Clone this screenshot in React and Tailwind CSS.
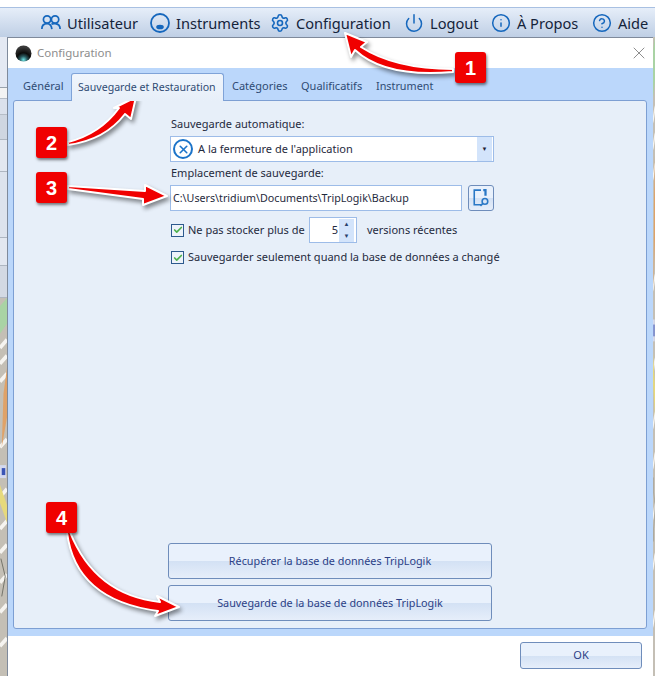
import { Settings, Power, Info, CircleHelp, X, Check } from 'lucide-react';

const toolbarItems = [
  { label: 'Utilisateur', icon: <UsersIcon />, width: 'w-[71px]' },
  { label: 'Instruments', icon: <InstrumentIcon />, width: 'w-[82px]' },
  { label: 'Configuration', icon: <Settings size={22} strokeWidth={1.9} />, width: 'w-[96px]' },
  { label: 'Logout', icon: <Power size={22} strokeWidth={1.8} />, width: 'w-[49px]' },
  { label: 'À Propos', icon: <Info size={22} strokeWidth={1.8} />, width: 'w-[63px]' },
  { label: 'Aide', icon: <CircleHelp size={22} strokeWidth={1.8} />, width: 'w-[31px]' },
];

const tabs = [
  { label: 'Général', className: 'w-[58px] pl-[10px] text-[11px]' },
  { label: 'Sauvegarde et Restauration', active: true, className: 'w-[153px] pl-[6px] text-[10.6px]' },
  { label: 'Catégories', className: 'w-[69px] pl-[8px] text-[11px]' },
  { label: 'Qualificatifs', className: 'w-[75px] pl-[8px] text-[11px]' },
  { label: 'Instrument', className: 'w-[80px] pl-[8px] text-[10.8px]' },
];

const badges = [
  { n: 1, className: 'left-[455px] top-[52px]' },
  { n: 2, className: 'left-[36px] top-[127px]' },
  { n: 3, className: 'left-[36px] top-[172px]' },
  { n: 4, className: 'left-[46px] top-[502px]' },
];

const glossy =
  'bg-[linear-gradient(to_bottom,#e9f1fc_0%,#e9f1fc_50%,#d3e1f4_50%,#e6eefa_100%)] border border-[#6f8dbb] rounded-[3px] text-[#2b3f86]';

function UsersIcon() {
  return (
    <svg width="23" height="20" viewBox="0 0 23 20" fill="none" stroke="currentColor" strokeWidth="2">
      <circle cx="7" cy="6" r="4.2" />
      <circle cx="16.2" cy="6" r="4.2" />
      <path d="M1 17c0-4 2.5-6.2 6-6.2s5 2 5.5 6.2" />
      <path d="M12 11.5c1-.6 2.6-.9 4.2-.7 3.500.3 5.800 2.500 5.800 6.200" />
    </svg>
  );
}

function InstrumentIcon() {
  return (
    <svg width="20" height="20" viewBox="0 0 20 20">
      <circle cx="10" cy="10" r="9" fill="none" stroke="currentColor" strokeWidth="1.8" />
      <ellipse cx="10" cy="14" rx="3.800" ry="2.300" fill="currentColor" />
    </svg>
  );
}

function Orb() {
  return (
    <svg width="17" height="17" viewBox="0 0 17 17">
      <defs>
        <radialGradient id="orb" cx="50%" cy="90%" r="80%">
          <stop offset="0%" stopColor="#6fe6e6" />
          <stop offset="28%" stopColor="#2a5a60" />
          <stop offset="55%" stopColor="#0b0b0b" />
          <stop offset="100%" stopColor="#3a3a3a" />
        </radialGradient>
      </defs>
      <circle cx="8.500" cy="8.500" r="8" fill="url(#orb)" />
    </svg>
  );
}

function CheckBox() {
  return (
    <span className="flex items-center justify-center w-[13px] h-[13px] shrink-0 border border-[#2d5a8e] bg-[#eef3fa]">
      <Check size={10} strokeWidth={4} className="text-[#4cb04c]" />
    </span>
  );
}

function MapStrip({ className }) {
  return (
    <svg className={className} viewBox="0 0 8 380" preserveAspectRatio="none">
      <rect width="8" height="380" fill="#c4bfb5" />
      <path d="M0 8L8 0V26L0 36Z" fill="#a9d3a4" />
      <path d="M0 50L8 42M0 66L8 58M0 84L8 76M0 150L8 142M0 200L8 192M0 232L8 224M0 256L8 248M0 286L8 278M0 316L8 308M0 350L8 342" stroke="#f6f4f0" strokeWidth="4" />
      <path d="M4 96L8 70V120L2 150Z" fill="#dfa268" />
      <path d="M0 188L8 208V226L0 206Z" fill="#e6d97c" />
      <rect y="168" width="7" height="13" fill="#d4d9ee" />
      <rect y="171" x="2" width="4" height="7" fill="#3b55b5" />
      <path d="M1 262L6 280L2 300" stroke="#6f6f66" strokeWidth="1" fill="none" />
    </svg>
  );
}

export default function App() {
  return (
    <div className="relative w-[655px] h-[676px] overflow-hidden bg-white font-['Noto_Sans',sans-serif]">
      <div className="h-[7px] bg-white" />

      {/* Top menu */}
      <div className="h-[30px] flex justify-end items-center gap-[12px] pr-[6px] border-t border-[#a8c0e2] bg-linear-to-b from-[#e6eef9] to-[#bfcfe5]">
        {toolbarItems.map((item) => (
          <div key={item.label} className="flex items-center gap-[6px]">
            <span className="flex w-[20px] justify-center text-[#1567bd]">{item.icon}</span>
            <span className={`${item.width} text-[14.6px] leading-5 whitespace-nowrap text-[#14233a]`}>{item.label}</span>
          </div>
        ))}
      </div>

      <div className="flex h-[639px]">
        {/* Window behind the dialog */}
        <div className="w-[7px] flex flex-col bg-[#dfe4ee]">
          <div className="h-[51px] border-b border-[#9aa3ad] bg-[#e4e9f3]" />
          <div className="h-[10px] bg-[#f3f3f3]" />
          <div className="h-[17px] border-y border-[#b6bdc7] bg-[#dbe1ec]" />
          <div className="h-[25px] border-b border-[#aeb6c1] bg-[#cfd6e1]" />
          <div className="h-[32px] border-b border-[#aeb6c1] bg-[#e2e7f0]" />
          <div className="h-[66px] border-b border-[#aeb6c1] bg-[#dde3ed]" />
          <div className="h-[28px] border-b border-[#aeb6c1] bg-[#e2e7f0]" />
          <div className="h-[32px] border-b border-[#aeb6c1] bg-[#d3d9e3]" />
          <MapStrip className="flex-1 w-[7px]" />
        </div>

        {/* Dialog */}
        <div className="w-[646px] flex flex-col border-l border-t border-[#7f8a9b] bg-white">
          <div className="h-[30px] shrink-0 flex items-center pl-[7px] pr-[4px] bg-white">
            <Orb />
            <span className="ml-[5px] text-[11.500px] text-[#8d8d8d]">Configuration</span>
            <X size={20} strokeWidth={1} className="ml-auto text-[#777]" />
          </div>

          <div className="flex-1 min-h-0 flex flex-col bg-[#bbd7fb] pl-[5px] pr-[6px] pb-[7px]">
            <div className="h-[32px] shrink-0 flex items-end relative z-10">
              {tabs.map((tab) => (
                <div
                  key={tab.label}
                  className={`${tab.className} shrink-0 h-[27px] flex items-center whitespace-nowrap text-[#2f4b73] ${
                    tab.active ? 'h-[28px] -mb-px rounded-t-[3px] border border-b-0 border-[#7fa3d8] bg-linear-to-b from-[#f0f5fc] to-[#e7eff9]' : ''
                  }`}
                >
                  {tab.label}
                </div>
              ))}
            </div>

            {/* Panel */}
            <div className="flex-1 min-h-0 flex flex-col pl-[154px] pt-[15px] pb-[7px] rounded-[3px] border border-[#7d9fd3] bg-[#e7eff9] text-[11px] text-[#1f2a3d]">
              <div className="ml-[2px] w-[324px] flex flex-col">
                <div className="h-[16px] pl-[1px] leading-4">Sauvegarde automatique:</div>
                <div className="mt-[4px] h-[26px] flex items-center pl-[2px] pr-px border border-[#9dbce8] bg-white">
                  <span className="flex items-center justify-center w-[20px] h-[20px] rounded-full border-2 border-[#1c74c9] text-[#1c74c9]">
                    <X size={13} strokeWidth={3} />
                  </span>
                  <span className="ml-[5px]">A la fermeture de l'application</span>
                  <span className="ml-auto w-[15px] h-[24px] flex items-center justify-center bg-[#d3e4fb] text-[#223] text-[6px]">▼</span>
                </div>
                <div className="mt-[3px] h-[16px] pl-[1px] leading-4">Emplacement de sauvegarde:</div>
                <div className="mt-[4px] flex gap-[6px]">
                  <div className="w-[292px] h-[26px] flex items-center pl-[2px] border border-[#9dbce8] bg-white text-[10.7px]">
                    C:\Users\tridium\Documents\TripLogik\Backup
                  </div>
                  <div className={`w-[26px] h-[26px] flex items-center justify-center ${glossy}`}>
                    <svg width="18" height="18" viewBox="0 0 16 16" fill="none" stroke="#2a78c6" strokeWidth="1.400">
                      <path d="M8 1H2v13h6" />
                      <path d="M10 1h2v5" strokeWidth="2" />
                      <circle cx="11.500" cy="11" r="2.500" />
                      <path d="M9.500 13l-2 2" />
                    </svg>
                  </div>
                </div>
                <div className="mt-[6px] h-[26px] flex items-center pl-px">
                  <CheckBox />
                  <span className="ml-[4px] w-[121px]">Ne pas stocker plus de</span>
                  <div className="w-[48px] h-[26px] flex items-center justify-end pr-[2px] border border-[#9dbce8] bg-white">
                    <span className="mr-[1px]">5</span>
                    <span className="w-[15px] h-[23px] flex flex-col items-center justify-around bg-[#d3e4fb] text-[6px] leading-none text-[#27406b]">
                      <span>▲</span>
                      <span>▼</span>
                    </span>
                  </div>
                  <span className="ml-[10px]">versions récentes</span>
                </div>
                <div className="mt-[5px] h-[19px] flex items-center pl-px whitespace-nowrap">
                  <CheckBox />
                  <span className="ml-[4px]">Sauvegarder seulement quand la base de données a changé</span>
                </div>
              </div>

              <button className={`mt-auto h-[36px] w-[324px] shrink-0 text-[10.8px] ${glossy}`}>Récupérer la base de données TripLogik</button>
              <button className={`mt-[6px] h-[36px] w-[324px] shrink-0 text-[10.8px] ${glossy}`}>Sauvegarde de la base de données TripLogik</button>
            </div>
          </div>

          <div className="h-[40px] shrink-0 flex justify-end items-start pt-[6px] pr-[11px] bg-white">
            <button className={`w-[122px] h-[27px] text-[11px] ${glossy}`}>OK</button>
          </div>
        </div>

        <MapStrip className="w-[2px] h-full" />
      </div>

      {/* Annotation arrows */}
      <svg className="absolute inset-0 pointer-events-none drop-shadow-[2px_3px_2px_rgba(0,0,0,0.45)]" width="655" height="676" fill="#f00000" stroke="#ffffff" strokeWidth="2" strokeLinejoin="round">
        <path d="M345 33L367 42L361 47Q395 69 453 69L453 72Q385 78 355 50L351 57Z" />
        <path d="M136 97L131 119L125 114Q105 140 68 145L68 142Q100 134 119 108L114 108Z" />
        <path d="M167 196L145 185L145 191L68 186L68 189L143 199L143 205Z" />
        <path d="M179 607L157 596L160 602Q95 595 70 532L67 532Q75 600 158 611L155 616Z" />
      </svg>

      {badges.map((b) => (
        <div
          key={b.n}
          className={`absolute ${b.className} w-[31px] h-[31px] flex items-center justify-center rounded-[3px] bg-[#f00000] shadow-[1px_2px_3px_rgba(0,0,0,0.5)] text-white font-bold text-[20px] font-['Liberation_Sans',sans-serif]`}
        >
          {b.n}
        </div>
      ))}
    </div>
  );
}
